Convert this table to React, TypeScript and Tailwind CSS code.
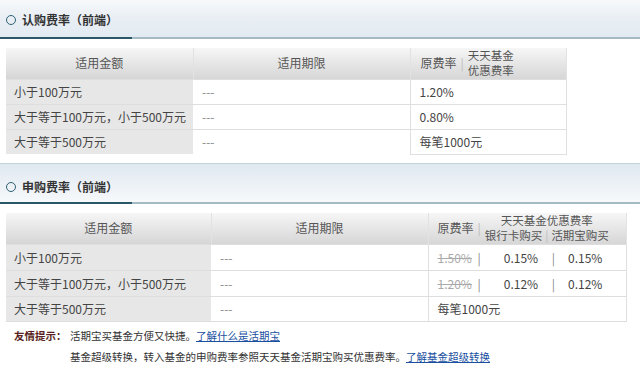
import React from "react";

const font = { fontFamily: '"Noto Sans CJK SC", "Liberation Sans", sans-serif' };

function SectionHeader({ title, topLine }: { title: string; topLine?: boolean }) {
  return (
    <div>
      {topLine && <div className="h-px bg-[#c4d2da]" />}
      <div
        className={`flex items-center pl-[6px] ${topLine ? "h-[38px] pt-[8px] bg-gradient-to-b from-[#dfe8f0] to-[#f7f9fb]" : "h-[37px] pt-[3px] bg-gradient-to-b from-[#f7f9fb] via-[#e8eef4] to-[#e3ebf2]"}`}
      >
        <span className="w-[10px] h-[10px] rounded-full border-[1.5px] border-[#2d6273] mr-[6px]" />
        <span className="text-[12px] font-bold text-[#333]">{title}</span>
      </div>
      <div className="flex h-[2px]">
        <div className="w-[132px] bg-[#2b5867]" />
        <div className="flex-1 bg-[#a6bac4]" />
      </div>
    </div>
  );
}

const th = "bg-gradient-to-b from-[#f6f6f6] to-[#d6d6d6] border-r border-[#e2e2e2] text-[#555] font-normal";

export default function App() {
  return (
    <div className="w-[640px] h-[369px] bg-white overflow-hidden text-[12px] text-[#444]" style={font}>
      <SectionHeader title="认购费率（前端）" />
      <div className="pl-[6px] pt-[9px]">
        <table className="border-collapse w-[560px] table-fixed">
          <colgroup>
            <col className="w-[187px]" />
            <col className="w-[217px]" />
            <col className="w-[156px]" />
          </colgroup>
          <thead>
            <tr className="h-[31px]">
              <th className={th}>适用金额</th>
              <th className={th}>适用期限</th>
              <th className={`${th} text-left`}>
                <div className="flex items-center pl-[10px]">
                  <span>原费率</span>
                  <span className="mx-[4px] text-[#bbb]">|</span>
                  <span className="flex flex-col items-center text-[11.5px] leading-[15px]">
                    <span>天天基金</span>
                    <span>优惠费率</span>
                  </span>
                </div>
              </th>
            </tr>
          </thead>
          <tbody>
            {[
              ["小于100万元", "1.20%"],
              ["大于等于100万元，小于500万元", "0.80%"],
              ["大于等于500万元", "每笔1000元"],
            ].map(([a, b]) => (
              <tr key={a} className="h-[25px] border-t border-[#dedede]">
                <td className="bg-[#e7e7e7] pl-[8px] whitespace-nowrap">{a}</td>
                <td className="pl-[9px] border-r border-[#e0e0e0] text-[#888]">---</td>
                <td className="pl-[9px] border-r border-[#e0e0e0] border-b border-b-[#e0e0e0]">{b}</td>
              </tr>
            ))}
          </tbody>
        </table>
      </div>
      <div className="mt-[8px]">
        <SectionHeader title="申购费率（前端）" topLine />
      </div>
      <div className="pl-[6px] pt-[9px]">
        <table className="border-collapse w-[620px] table-fixed">
          <colgroup>
            <col className="w-[205px]" />
            <col className="w-[217px]" />
            <col className="w-[198px]" />
          </colgroup>
          <thead>
            <tr className="h-[32px]">
              <th className={th}>适用金额</th>
              <th className={th}>适用期限</th>
              <th className={`${th} text-left`}>
                <div className="flex items-center pl-[9px]">
                  <span>原费率</span>
                  <span className="mx-[4px] text-[#bbb]">|</span>
                  <span className="flex flex-col items-center text-[11.5px] leading-[15px]">
                    <span>天天基金优惠费率</span>
                    <span>
                      银行卡购买<span className="mx-[3px] text-[#bbb]">|</span>活期宝购买
                    </span>
                  </span>
                </div>
              </th>
            </tr>
          </thead>
          <tbody>
            {[
              ["小于100万元", "1.50%", "0.15%"],
              ["大于等于100万元，小于500万元", "1.20%", "0.12%"],
            ].map(([a, o, d]) => (
              <tr key={a} className="h-[26px] border-t border-[#dedede]">
                <td className="bg-[#e7e7e7] pl-[8px] whitespace-nowrap">{a}</td>
                <td className="pl-[9px] border-r border-[#e0e0e0] text-[#888]">---</td>
                <td className="border-r border-[#e0e0e0]">
                  <div className="flex items-center pl-[9px]">
                    <span className="line-through text-[#aaa] w-[36px]">{o}</span>
                    <span className="text-[#888] ml-[4px]">|</span>
                    <span className="ml-[23px] w-[35px]">{d}</span>
                    <span className="text-[#888] ml-[13px]">|</span>
                    <span className="ml-[13px]">{d}</span>
                  </div>
                </td>
              </tr>
            ))}
            <tr className="h-[25px] border-t border-[#dedede] border-b border-b-[#dedede]">
              <td className="bg-[#e7e7e7] pl-[8px] whitespace-nowrap">大于等于500万元</td>
              <td className="pl-[9px] border-r border-[#e0e0e0] text-[#888]">---</td>
              <td className="pl-[9px] border-r border-[#e0e0e0]">每笔1000元</td>
            </tr>
          </tbody>
        </table>
      </div>
      <div className="pl-[14px] pt-[3px] text-[10.5px] text-[#333] leading-[21px]">
        <div className="flex whitespace-nowrap">
          <span className="font-bold text-[#5a1f22] w-[56px] shrink-0">友情提示：</span>
          <span>
            活期宝买基金方便又快捷。<a className="text-[#1a4fa0] underline">了解什么是活期宝</a>
          </span>
        </div>
        <div className="pl-[56px] whitespace-nowrap">
          基金超级转换，转入基金的申购费率参照天天基金活期宝购买优惠费率。<a className="text-[#1a4fa0] underline">了解基金超级转换</a>
        </div>
      </div>
    </div>
  );
}
